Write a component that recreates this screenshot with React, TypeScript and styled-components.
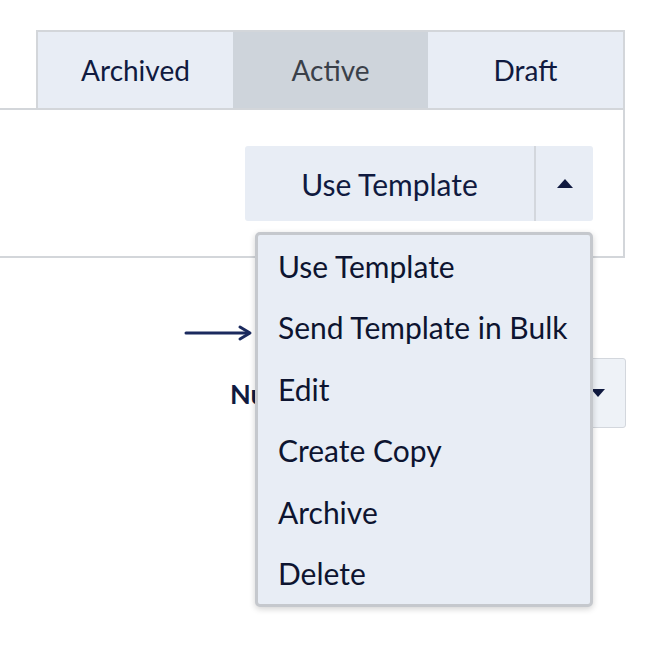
import React from "react";
import styled, { createGlobalStyle } from "styled-components";

const Global = createGlobalStyle`
  html, body { margin: 0; padding: 0; background: #ffffff; }
  body { font-family: Lato, "Open Sans", sans-serif; }
`;

const Page = styled.div`
  position: relative;
  width: 668px;
  height: 650px;
  overflow: hidden;
  padding-top: 30px;
  box-sizing: border-box;
`;

const TabBar = styled.div`
  display: flex;
  margin-left: 36px;
  width: 589px;
  height: 78px;
  box-sizing: border-box;
  border: 2px solid #d3d6da;
  border-bottom: none;
`;

const Tab = styled.div<{ $active?: boolean }>`
  flex: 1;
  display: flex;
  align-items: center;
  justify-content: center;
  background: ${(p) => (p.$active ? "#ced4db" : "#e8edf5")};
  color: ${(p) => (p.$active ? "#3a4049" : "#101a40")};
  font-size: 28px;
`;

const Panel = styled.div`
  width: 625px;
  height: 150px;
  box-sizing: border-box;
  border: 2px solid #d3d6da;
  border-left: none;
  display: flex;
  justify-content: flex-end;
  align-items: flex-start;
  padding: 36px 30px 0 0;
`;

const SplitButton = styled.div`
  display: flex;
  height: 75px;
  background: #e8edf5;
  border-radius: 3px;
`;

const MainPart = styled.div`
  width: 289px;
  display: flex;
  align-items: center;
  justify-content: center;
  color: #101a40;
  font-size: 30px;
  border-right: 2px solid #d3d7dd;
`;

const ArrowPart = styled.div`
  width: 57px;
  display: flex;
  align-items: center;
  justify-content: center;
`;

const Row = styled.div`
  display: flex;
  align-items: center;
  margin-top: 100px;
  padding-left: 230px;
  width: 626px;
  box-sizing: border-box;
  gap: 20px;
`;

const Label = styled.div`
  font-weight: 700;
  font-size: 27px;
  color: #101a40;
  white-space: nowrap;
`;

const Select = styled.div`
  flex: 1;
  height: 70px;
  box-sizing: border-box;
  border: 1px solid #d3d7dd;
  border-radius: 3px;
  background: #eef2f7;
  display: flex;
  align-items: center;
  justify-content: flex-end;
  padding-right: 20px;
`;

const Menu = styled.div`
  position: absolute;
  left: 255px;
  top: 232px;
  width: 338px;
  box-sizing: border-box;
  border: 3px solid #c5c8cd;
  border-radius: 5px;
  background: #e8edf5;
  box-shadow: 0 2px 6px rgba(0, 0, 0, 0.18);
`;

const MenuItem = styled.div`
  height: 61.5px;
  display: flex;
  align-items: center;
  padding-left: 20px;
  color: #0d1430;
  font-size: 30px;
`;

const Pointer = styled.svg`
  position: absolute;
  left: 184px;
  top: 323px;
`;

const items = [
  "Use Template",
  "Send Template in Bulk",
  "Edit",
  "Create Copy",
  "Archive",
  "Delete",
];

export default function App() {
  return (
    <>
      <Global />
      <Page>
        <TabBar>
          <Tab>Archived</Tab>
          <Tab $active>Active</Tab>
          <Tab>Draft</Tab>
        </TabBar>
        <Panel>
          <SplitButton>
            <MainPart>Use Template</MainPart>
            <ArrowPart>
              <svg width="16" height="9" viewBox="0 0 16 9">
                <path d="M8 0 L16 9 L0 9 Z" fill="#101a40" />
              </svg>
            </ArrowPart>
          </SplitButton>
        </Panel>
        <Row>
          <Label>Number of Recipients</Label>
          <Select>
            <svg width="14" height="8" viewBox="0 0 14 8">
              <path d="M0 0 L14 0 L7 8 Z" fill="#101a40" />
            </svg>
          </Select>
        </Row>
        <Menu>
          {items.map((t) => (
            <MenuItem key={t}>{t}</MenuItem>
          ))}
        </Menu>
        <Pointer width="72" height="20" viewBox="0 0 72 20">
          <line x1="2" y1="10" x2="64" y2="10" stroke="#1b2a5e" strokeWidth="3" strokeLinecap="round" />
          <path d="M56 4 L66 10 L56 16" fill="none" stroke="#1b2a5e" strokeWidth="3" strokeLinecap="round" strokeLinejoin="round" />
        </Pointer>
      </Page>
    </>
  );
}
